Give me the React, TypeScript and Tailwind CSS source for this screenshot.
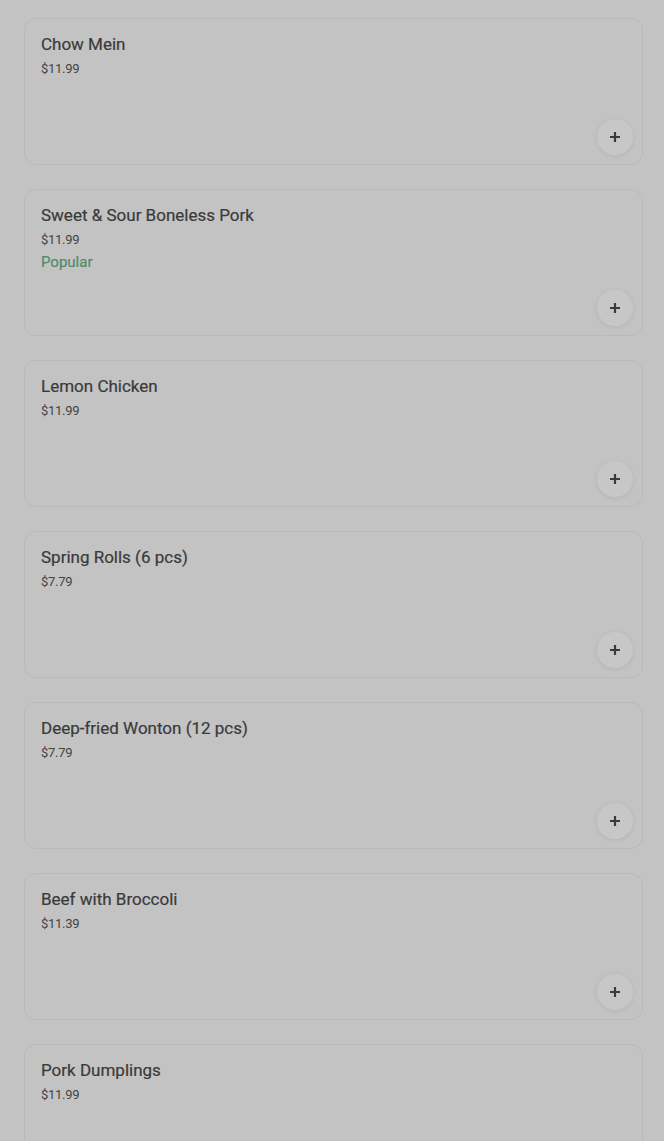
const items = [
    { name: "Chow Mein", price: "$11.99" },
    { name: "Sweet & Sour Boneless Pork", price: "$11.99", popular: true },
    { name: "Lemon Chicken", price: "$11.99" },
    { name: "Spring Rolls (6 pcs)", price: "$7.79" },
    { name: "Deep-fried Wonton (12 pcs)", price: "$7.79" },
    { name: "Beef with Broccoli", price: "$11.39" },
    { name: "Pork Dumplings", price: "$11.99" },
];

const PlusIcon = () => (
    <svg width="12" height="12" viewBox="0 0 12 12" fill="none">
        <path d="M6 1v10M1 6h10" stroke="#3a3a3a" strokeWidth="2.2" />
    </svg>
);

export default function App() {
    return (
        <div
            className="min-h-[1141px] bg-[#c3c3c3] pl-6 pr-[21px] pt-[18px] flex flex-col gap-6"
            style={{ fontFamily: "Roboto, 'Noto Sans', sans-serif" }}
        >
            {items.map((item) => (
                <div
                    key={item.name}
                    className="h-[147px] shrink-0 rounded-xl border border-[#b9b9b9] bg-[#c3c3c3] flex flex-col pl-4 pt-[13px] pr-[9px] pb-[9px]"
                >
                    <p className="text-[17px] leading-[24px] text-[#3a3a3a] [-webkit-text-stroke:0.2px_#3a3a3a]">
                        {item.name}
                    </p>
                    <p className="text-[13px] leading-[20px] tracking-[-0.3px] text-[#444444] mt-[3px]">
                        {item.price}
                    </p>
                    {item.popular && (
                        <p className="text-[15px] leading-[20px] text-[#4e8a6c] mt-[2px] [-webkit-text-stroke:0.2px_#4e8a6c]">
                            Popular
                        </p>
                    )}
                    <div className="mt-auto self-end w-9 h-9 rounded-full bg-[#c7c7c7] shadow-[0_1px_5px_rgba(0,0,0,0.08)] flex items-center justify-center">
                        <PlusIcon />
                    </div>
                </div>
            ))}
        </div>
    );
}
